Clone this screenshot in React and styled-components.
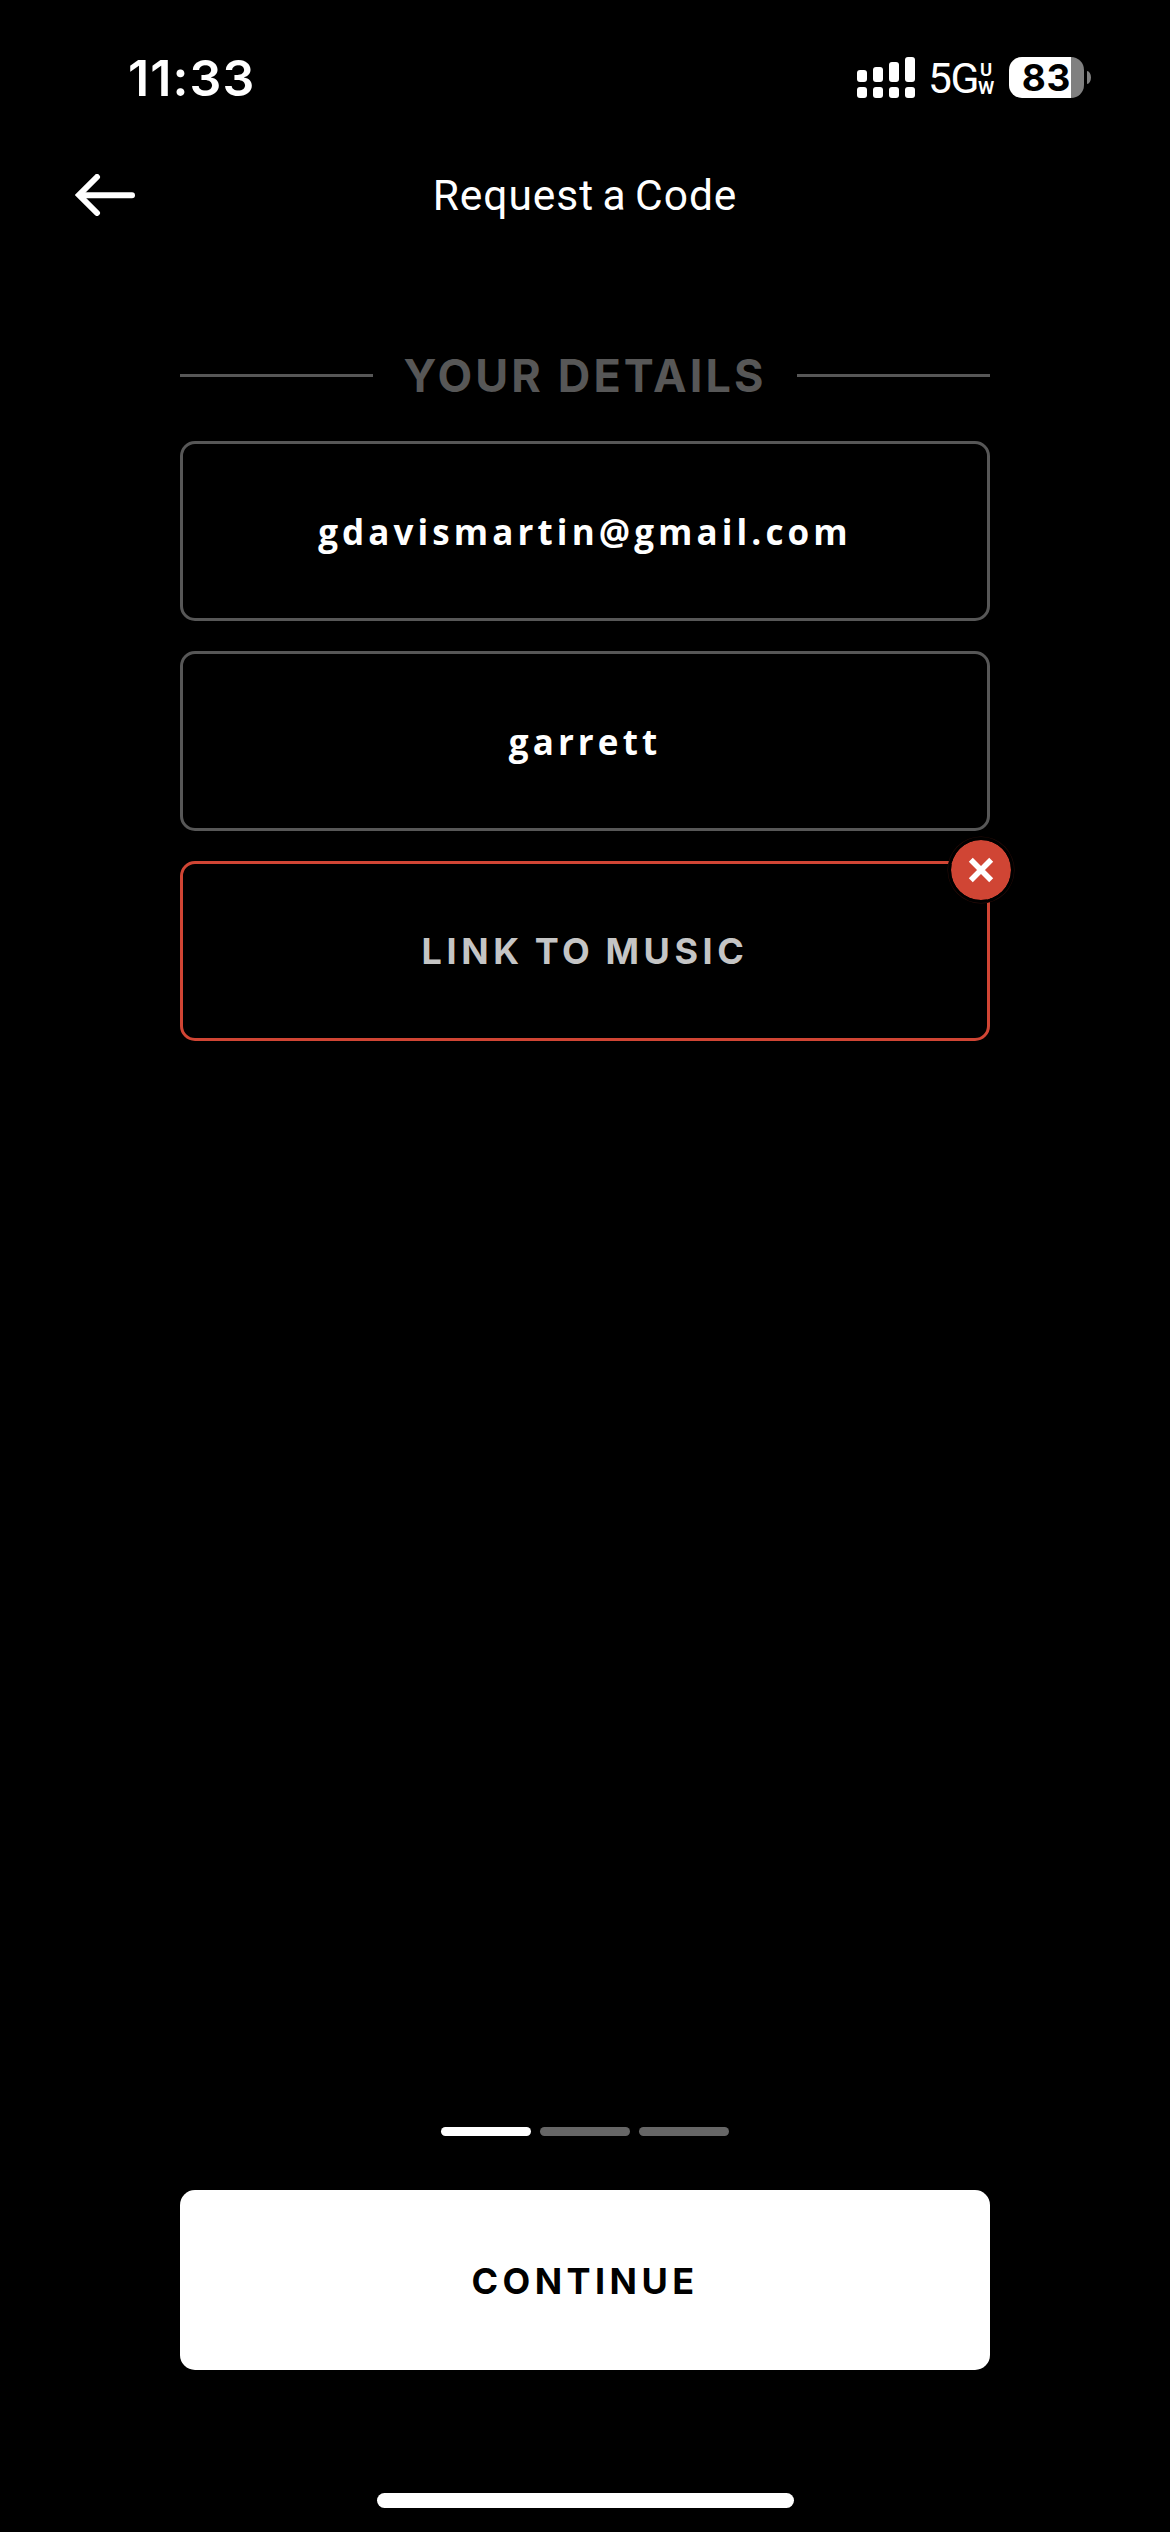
import React from "react";
import styled, { createGlobalStyle } from "styled-components";

const GlobalStyle = createGlobalStyle`
  *, *::before, *::after { box-sizing: border-box; }
  html, body { margin: 0; background: #000; }
  body { font-family: Inter, "Liberation Sans", sans-serif; color: #fff; }
`;

const Screen = styled.main`
  display: flex;
  flex-direction: column;
  width: 1170px;
  height: 2532px;
  background: #000;
  overflow: hidden;
`;

const StatusBar = styled.div`
  display: flex;
  align-items: center;
  justify-content: space-between;
  height: 155px;
  padding: 0 79px 0 128px;
`;

const Clock = styled.span`
  font: 600 50px Inter, sans-serif;
  letter-spacing: 1.1px;
`;

const StatusIcons = styled.div`
  display: flex;
  align-items: center;
`;

const SignalIcon = styled.svg`
  display: block;
  width: 58px;
  height: 41px;
`;

const Network = styled.div`
  display: flex;
  align-items: center;
  width: 68px;
  margin: 3px 13px 0 13px;
`;

const NetworkName = styled.span`
  width: 49px;
  font: 450 42.5px/50px Roboto, sans-serif;
  letter-spacing: -1.4px;
`;

const NetworkSuffix = styled.span`
  display: flex;
  flex-direction: column;
  align-items: center;
  width: 18px;
  font: 600 18.5px/18px Roboto, sans-serif;
`;

const Battery = styled.div`
  display: flex;
  align-items: center;
  gap: 3px;
`;

const BatteryBody = styled.div`
  display: flex;
  align-items: center;
  justify-content: center;
  width: 75px;
  height: 41px;
  border-radius: 13px;
  background: linear-gradient(to right, #fff 0 ${(p) => p.$level}px, #808080 ${(p) => p.$level}px);
  color: #000;
  font: 700 37px/41px Inter, sans-serif;
  letter-spacing: 0.8px;
`;

const BatteryCap = styled.div`
  width: 4px;
  height: 13px;
  border-radius: 0 4px 4px 0 / 0 6.5px 6.5px 0;
  background: #808080;
`;

const Header = styled.header`
  display: grid;
  grid-template-columns: 60px 1fr 60px;
  align-items: center;
  height: 80px;
  padding: 0 75px;
`;

const BackButton = styled.button`
  display: block;
  padding: 0;
  border: 0;
  background: none;
  color: #fff;
`;

const BackIcon = styled.svg`
  display: block;
  width: 60px;
  height: 42px;
`;

const Title = styled.h1`
  margin: 0;
  font: 400 42.5px Roboto, sans-serif;
  letter-spacing: 0.95px;
  word-spacing: -3px;
  text-align: center;
`;

const Form = styled.section`
  display: flex;
  flex-direction: column;
  gap: 30px;
  padding: 110px 180px 0;
`;

const SectionHeading = styled.div`
  display: flex;
  align-items: center;
  justify-content: space-between;
  height: 66px;
`;

const Rule = styled.span`
  width: 193px;
  height: 3px;
  margin-bottom: 5px;
  background: #575757;
`;

const SectionTitle = styled.h2`
  margin: 0;
  padding-bottom: 5px;
  color: #575757;
  font-size: 45px;
  font-weight: 700;
  letter-spacing: 3.1px;
`;

const Field = styled.div`
  position: relative;
  display: flex;
  align-items: center;
  justify-content: center;
  height: 180px;
  border: 3px solid ${(p) => (p.$error ? "#d04534" : "#575757")};
  border-radius: 15px;
`;

const Value = styled.span`
  font: 700 35px "Open Sans", sans-serif;
  letter-spacing: 4.1px;
`;

const Placeholder = styled.span`
  color: #c5c5c5;
  font-size: 36px;
  font-weight: 700;
  letter-spacing: 4.55px;
  word-spacing: -2px;
`;

const ClearButton = styled.button`
  position: absolute;
  top: -27px;
  right: -27px;
  display: grid;
  place-items: center;
  width: 66px;
  height: 66px;
  padding: 0;
  border: 3px solid #000;
  border-radius: 50%;
  background: #d04534;
  background-clip: padding-box;
  box-shadow: 0 0 0 0.5px #2a0c08;
`;

const ClearIcon = styled.svg`
  display: block;
  width: 26px;
  height: 26px;
`;

const Footer = styled.footer`
  display: flex;
  flex-direction: column;
  align-items: center;
  margin-top: auto;
  padding: 0 180px 24px;
`;

const Steps = styled.div`
  display: flex;
  gap: 9px;
  margin-bottom: 54px;
`;

const Step = styled.span`
  width: 90px;
  height: 9px;
  border-radius: 4.5px;
  background: ${(p) => (p.$active ? "#fff" : "#666")};
`;

const ContinueButton = styled.button`
  width: 100%;
  height: 180px;
  padding: 2px 0 0;
  border: 0;
  border-radius: 15px;
  background: #fff;
  color: #000;
  font: 700 36px Inter, sans-serif;
  letter-spacing: 4.4px;
`;

const HomeIndicator = styled.div`
  width: 417px;
  height: 15px;
  margin-top: 123px;
  border-radius: 7.5px;
  background: #fff;
`;

const BARS = [
  { x: 0, top: 13 },
  { x: 16, top: 10 },
  { x: 32, top: 5 },
  { x: 48, top: 0 },
];

export default function App() {
  return (
    <>
      <GlobalStyle />
      <Screen>
        <StatusBar>
          <Clock>11:33</Clock>
          <StatusIcons>
            <SignalIcon viewBox="0 0 58 41" fill="#fff">
              {BARS.map((bar) => (
                <g key={bar.x}>
                  <rect x={bar.x} y={bar.top} width="10" height={25 - bar.top} rx="3" />
                  <rect x={bar.x} y="30" width="10" height="11" rx="3" />
                </g>
              ))}
            </SignalIcon>
            <Network>
              <NetworkName>5G</NetworkName>
              <NetworkSuffix>
                <span>U</span>
                <span>W</span>
              </NetworkSuffix>
            </Network>
            <Battery>
              <BatteryBody $level={62}>83</BatteryBody>
              <BatteryCap />
            </Battery>
          </StatusIcons>
        </StatusBar>

        <Header>
          <BackButton aria-label="Back">
            <BackIcon viewBox="0 0 60 42" fill="none" stroke="currentColor" strokeWidth="6" strokeLinecap="round">
              <path d="M57 21.3H6" />
              <path d="M22 3L4 21L22 39" strokeLinejoin="miter" />
            </BackIcon>
          </BackButton>
          <Title>Request a Code</Title>
        </Header>

        <Form>
          <SectionHeading>
            <Rule />
            <SectionTitle>YOUR DETAILS</SectionTitle>
            <Rule />
          </SectionHeading>
          <Field>
            <Value>gdavismartin@gmail.com</Value>
          </Field>
          <Field>
            <Value>garrett</Value>
          </Field>
          <Field $error>
            <Placeholder>LINK TO MUSIC</Placeholder>
            <ClearButton aria-label="Clear">
              <ClearIcon viewBox="0 0 26 26" fill="none" stroke="#fff" strokeWidth="5.6">
                <path d="M2.8 2.8L23.2 23.2M23.2 2.8L2.8 23.2" />
              </ClearIcon>
            </ClearButton>
          </Field>
        </Form>

        <Footer>
          <Steps>
            <Step $active />
            <Step />
            <Step />
          </Steps>
          <ContinueButton>CONTINUE</ContinueButton>
          <HomeIndicator />
        </Footer>
      </Screen>
    </>
  );
}
